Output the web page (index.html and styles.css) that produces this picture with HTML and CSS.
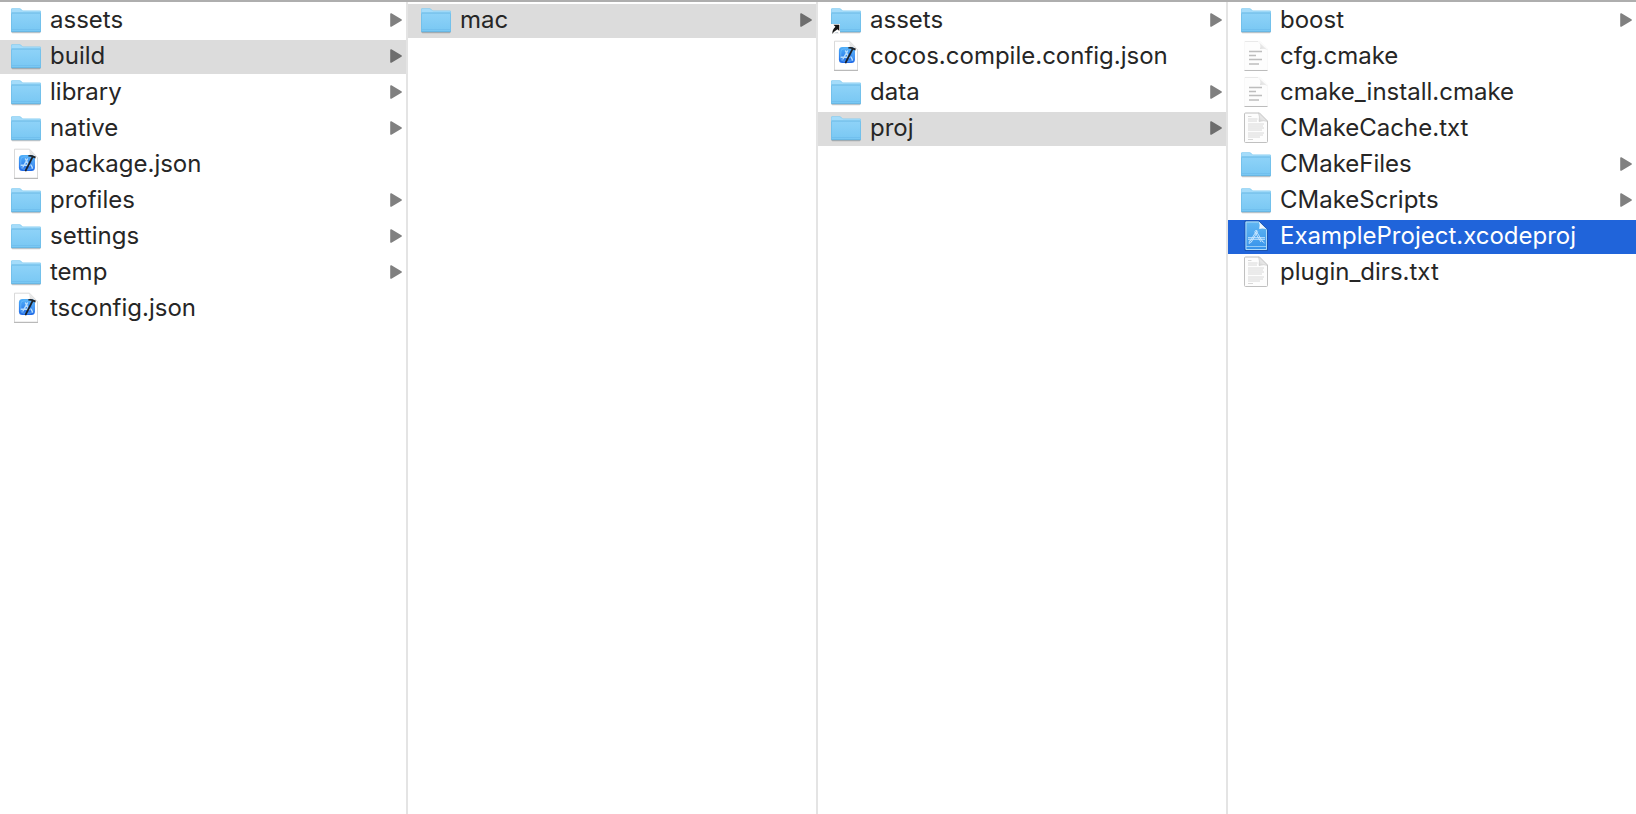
FILE: index.html
```html
<!DOCTYPE html>
<html lang="en">
<head>
<meta charset="utf-8">
<title>Project files</title>
<link rel="stylesheet" href="styles.css">
</head>
<body>
<svg class="defs" aria-hidden="true">
  <defs>
    <linearGradient id="folder-fill" x1="0" y1="0" x2="0" y2="1">
      <stop offset="0" stop-color="#8fd3f8"/><stop offset="1" stop-color="#78c7f3"/>
    </linearGradient>
    <linearGradient id="app-fill" x1="0" y1="0" x2="0" y2="1">
      <stop offset="0" stop-color="#4fb0fa"/><stop offset="1" stop-color="#2069e6"/>
    </linearGradient>
    <linearGradient id="project-fill" x1="0" y1="0" x2="0" y2="1">
      <stop offset="0" stop-color="#62b8f3"/><stop offset="1" stop-color="#3591ea"/>
    </linearGradient>
    <linearGradient id="fold-fill" x1="0" y1="1" x2="1" y2="0">
      <stop offset="0" stop-color="#d5d5d5"/><stop offset="1" stop-color="#fff"/>
    </linearGradient>
  </defs>
  <symbol id="folder" viewBox="0 0 32 34">
    <path d="M1.500 27.500h29v.8q0 .9-1 .9h-27q-1 0-1-.9z" fill="#000" opacity=".22"/>
    <path d="M1 5.500Q1 4.200 2.300 4.200H9.500Q10.500 4.200 11.200 5L12 5.900Q12.500 6.400 13.500 6.400H29.700Q31 6.400 31 7.700V12H1z" fill="#86cdf2"/>
    <path d="M1.500 5.700Q1.500 4.900 2.400 4.900H9.400Q10.300 4.900 11 5.800T13.200 7.300H29.500Q30.500 7.300 30.500 8.300V9H1.500z" fill="#a5dcfa"/>
    <rect x="1" y="8.500" width="30" height="19.500" rx="1" fill="url(#folder-fill)"/>
    <path d="M1.500 9H30.500" stroke="#68b7e2" stroke-width=".9"/>
    <path d="M1.500 9.500V27.500M30.500 9.500V27.500" stroke="#6dbbe6" stroke-width=".7"/>
    <path d="M2 25.500H30" stroke="#68b7e8" stroke-width=".5"/>
    <path d="M1.300 27.700H30.700" stroke="#61afd9" stroke-width=".8"/>
  </symbol>
  <symbol id="alias" viewBox="0 0 32 34">
    <use href="#folder"/>
    <path d="M1 20h9V30.500L7.500 28Q3 29 2 31Q.5 30 1 27z" fill="#fff"/>
    <path d="M3.500 20.700H9.300V27L7.500 25.300Q3.800 27.500 2.500 30Q1.800 26 5.400 22.800z" fill="#151515"/>
  </symbol>
  <symbol id="json" viewBox="0 0 32 34">
    <path d="M4.500 1.200H19.500L27.500 9.500V30.300H4.500z" fill="#fff" stroke="#cfcfcf" stroke-width=".8"/>
    <path d="M4 30.400H28" stroke="#a9a9a9" stroke-width=".8"/>
    <path d="M18.800 1.200Q20.500 5 19.500 9Q24 8 27.500 9.500z" fill="url(#fold-fill)"/>
    <rect x="8.900" y="7" width="16" height="16" rx="3.500" fill="url(#app-fill)"/>
    <rect x="10.800" y="8.900" width="12.200" height="12.200" rx="3" fill="none" stroke="#7bc5fa" stroke-width=".6"/>
    <path d="M15.500 11L19 17.500M17.500 11L13 19M11.300 17.200H18M21 17l1.500 3" stroke="#b5dcfd" stroke-width="1.500" fill="none" stroke-linecap="round"/>
    <path d="M22.300 9.500L15.700 22.500" stroke="#1c222b" stroke-width="1.700" stroke-linecap="round"/>
    <path d="M18.300 7.200Q22 6.400 24 8.100L25.800 8.500L25.400 10.500L23.400 9.800Q21 8.300 18.300 8.500z" fill="#202226"/>
  </symbol>
  <symbol id="blank" viewBox="0 0 32 34">
    <path d="M4.500 1.300H20L27.500 9V30.300H4.500z" fill="#fdfdfd" stroke="#f3f3f3" stroke-width=".6"/>
    <path d="M5 1.500H18" fill="none" stroke="#ddd" stroke-width=".6"/>
    <path d="M18 1.300Q21.500 4.500 20 9Q24 8 27.500 10z" fill="url(#fold-fill)"/>
    <path d="M4.500 30.500H27.500" stroke="#bcbcbc"/>
    <path d="M9 11.500H22M9 15.500H16M9 19.500H22M9 24H19" stroke="#bdbdbd" stroke-width="1.400"/>
  </symbol>
  <symbol id="text" viewBox="0 0 32 34">
    <path d="M5.500 1H19.500L27.500 9V29.500Q27.500 30.500 26.500 30.500H5.500Q4.500 30.500 4.500 29.500V2Q4.500 1 5.500 1z" fill="#fdfdfd" stroke="#b9b9b9" stroke-width=".9"/>
    <path d="M18.500 1Q20 5 19 9.500Q24 8 27.500 9.500z" fill="url(#fold-fill)" stroke="#c0c0c0" stroke-width=".5"/>
    <path d="M8 4.500H11.500M8 7H17.500M8 9H17M8 12H24M8 14H23M8 16H24M8 18H22M8 21H24M8 23H23M8 25H20M8 27.500H13" stroke="#cecece" stroke-width=".8"/>
  </symbol>
  <symbol id="project" viewBox="0 0 32 34">
    <path d="M5 1H19L27.500 9.500V30.500H5z" fill="url(#project-fill)" stroke="#1646a0" stroke-width=".8"/>
    <path d="M6 2H18.500M6 2V29.500H26.500V10" fill="none" stroke="#b9e0fb" stroke-width=".9"/>
    <path d="M6 26.500H26.500" stroke="#a8d7fa" stroke-width=".8"/>
    <path d="M18.700 1.500Q20.500 5 19.200 9Q23 8 27 9.500z" fill="#f2f8fd"/>
    <path d="M17 10L10 21.500M15.500 10L22.500 21.500M17.800 11.300L11.300 22M14.500 11.500L21 22M8 17.700H25M8 19.300H25" fill="none" stroke="#d0eaff" stroke-width=".9"/>
    <path d="M9.500 20.500l-.5 3 2.500-1.500M22 21l2.500 2" fill="none" stroke="#d0eaff" stroke-width=".8"/>
  </symbol>
  <symbol id="arrow" viewBox="0 0 12 14">
    <path d="M1 1L11 7L1 13z" fill="currentColor" stroke="currentColor" stroke-width="1.600" stroke-linejoin="round"/>
  </symbol>
</svg>

<main class="browser">
  <ul class="column" aria-label="Project">
    <li><button class="row"><svg class="icon"><use href="#folder"/></svg><span class="name">assets</span><svg class="arrow"><use href="#arrow"/></svg></button></li>
    <li><button class="row open"><svg class="icon"><use href="#folder"/></svg><span class="name">build</span><svg class="arrow"><use href="#arrow"/></svg></button></li>
    <li><button class="row"><svg class="icon"><use href="#folder"/></svg><span class="name">library</span><svg class="arrow"><use href="#arrow"/></svg></button></li>
    <li><button class="row"><svg class="icon"><use href="#folder"/></svg><span class="name">native</span><svg class="arrow"><use href="#arrow"/></svg></button></li>
    <li><button class="row"><svg class="icon"><use href="#json"/></svg><span class="name">package.json</span></button></li>
    <li><button class="row"><svg class="icon"><use href="#folder"/></svg><span class="name">profiles</span><svg class="arrow"><use href="#arrow"/></svg></button></li>
    <li><button class="row"><svg class="icon"><use href="#folder"/></svg><span class="name">settings</span><svg class="arrow"><use href="#arrow"/></svg></button></li>
    <li><button class="row"><svg class="icon"><use href="#folder"/></svg><span class="name">temp</span><svg class="arrow"><use href="#arrow"/></svg></button></li>
    <li><button class="row"><svg class="icon"><use href="#json"/></svg><span class="name">tsconfig.json</span></button></li>
  </ul>
  <ul class="column" aria-label="build">
    <li><button class="row open"><svg class="icon"><use href="#folder"/></svg><span class="name">mac</span><svg class="arrow"><use href="#arrow"/></svg></button></li>
  </ul>
  <ul class="column" aria-label="mac">
    <li><button class="row"><svg class="icon"><use href="#alias"/></svg><span class="name">assets</span><svg class="arrow"><use href="#arrow"/></svg></button></li>
    <li><button class="row"><svg class="icon"><use href="#json"/></svg><span class="name">cocos.compile.config.json</span></button></li>
    <li><button class="row"><svg class="icon"><use href="#folder"/></svg><span class="name">data</span><svg class="arrow"><use href="#arrow"/></svg></button></li>
    <li><button class="row open"><svg class="icon"><use href="#folder"/></svg><span class="name">proj</span><svg class="arrow"><use href="#arrow"/></svg></button></li>
  </ul>
  <ul class="column" aria-label="proj">
    <li><button class="row"><svg class="icon"><use href="#folder"/></svg><span class="name">boost</span><svg class="arrow"><use href="#arrow"/></svg></button></li>
    <li><button class="row"><svg class="icon"><use href="#blank"/></svg><span class="name">cfg.cmake</span></button></li>
    <li><button class="row"><svg class="icon"><use href="#blank"/></svg><span class="name">cmake_install.cmake</span></button></li>
    <li><button class="row"><svg class="icon"><use href="#text"/></svg><span class="name">CMakeCache.txt</span></button></li>
    <li><button class="row"><svg class="icon"><use href="#folder"/></svg><span class="name">CMakeFiles</span><svg class="arrow"><use href="#arrow"/></svg></button></li>
    <li><button class="row"><svg class="icon"><use href="#folder"/></svg><span class="name">CMakeScripts</span><svg class="arrow"><use href="#arrow"/></svg></button></li>
    <li><button class="row selected"><svg class="icon"><use href="#project"/></svg><span class="name">ExampleProject.xcodeproj</span></button></li>
    <li><button class="row"><svg class="icon"><use href="#text"/></svg><span class="name">plugin_dirs.txt</span></button></li>
  </ul>
</main>
</body>
</html>
```
FILE: styles.css
```css
* {
  box-sizing: border-box;
}

body {
  margin: 0;
  background: #fff;
  color: #262626;
  font-family: Inter, "Liberation Sans", sans-serif;
  font-size: 24px;
}

.defs {
  display: block;
  width: 0;
  height: 0;
}

.browser {
  display: grid;
  grid-template-columns: 408fr 410fr 410fr 408fr;
  min-height: 100vh;
  border-top: 2px solid #aeaeae;
}

.column {
  display: flex;
  flex-direction: column;
  gap: 2px;
  min-width: 0;
  margin: 0;
  padding: 2px 0 0;
  border-right: 2px solid #e4e4e4;
  list-style: none;
}

.column:last-child {
  border-right: 0;
}

.row {
  display: flex;
  align-items: center;
  width: 100%;
  height: 34px;
  padding: 0 4px 0 12px;
  border: 0;
  background: transparent;
  color: inherit;
  font: inherit;
  line-height: 32px;
  text-align: left;
}

.column:first-child .row {
  padding-left: 10px;
}

.row.open {
  background: #dcdcdc;
}

.row.selected {
  background: #2064da;
  color: #fff;
}

.icon {
  flex: none;
  width: 32px;
  height: 34px;
  margin-right: 8px;
}

.name {
  flex: 1;
  min-width: 0;
  padding-bottom: 2px;
  white-space: nowrap;
}

.arrow {
  flex: none;
  width: 12px;
  height: 14px;
  margin-bottom: 2px;
  color: #808080;
}

.open .arrow {
  color: #6e6e6e;
}
```
